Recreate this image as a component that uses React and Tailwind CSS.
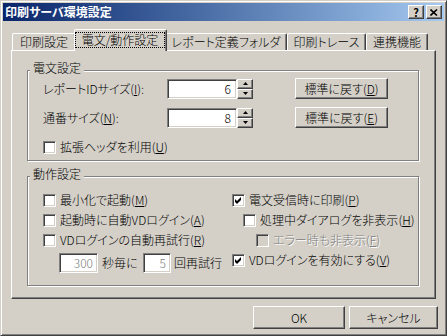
import React from 'react';

const raised =
  'border border-t-white border-l-white border-r-[#404040] border-b-[#404040] shadow-[inset_-1px_-1px_#808080] bg-[#d4d0c8]';
const sunken =
  'border border-t-[#808080] border-l-[#808080] border-r-white border-b-white shadow-[inset_1px_1px_#404040,inset_-1px_-1px_#d4d0c8]';

const Acc = ({ c }) => <span className="underline underline-offset-[1px]">{c}</span>;

const Check = () => (
  <svg width="9" height="9" viewBox="0 0 9 9">
    <polygon points="1,3 3,5 7,1 7,4 3,8 1,6" fill="#000" />
  </svg>
);

const CheckBox = ({ checked, disabled, label, acc, className = '' }) => (
  <div className={`flex items-center gap-[4px] h-[20px] ${className}`}>
    <span
      className={`w-[13px] h-[13px] shrink-0 flex items-center justify-center ${sunken} ${
        disabled ? 'bg-[#d4d0c8]' : 'bg-white'
      }`}
    >
      {checked && <Check />}
    </span>
    <span className={disabled ? 'text-[#808080] [text-shadow:1px_1px_0_#fff]' : ''}>
      {label}(<Acc c={acc} />)
    </span>
  </div>
);

const Spinner = () => (
  <div className="flex flex-col w-[16px] h-[20px]">
    <div className={`flex-1 flex items-center justify-center ${raised}`}>
      <svg width="5" height="3" viewBox="0 0 5 3">
        <polygon points="2.5,0 5,3 0,3" fill="#000" />
      </svg>
    </div>
    <div className={`flex-1 flex items-center justify-center ${raised}`}>
      <svg width="5" height="3" viewBox="0 0 5 3">
        <polygon points="0,0 5,0 2.5,3" fill="#000" />
      </svg>
    </div>
  </div>
);

const Group = ({ title, className = '', children }) => (
  <div
    className={`relative w-[392px] border border-[#808080] shadow-[1px_1px_0_#fff,inset_1px_1px_0_#fff] ${className}`}
  >
    <span className="absolute left-[2px] -top-[10px] bg-[#d4d0c8] px-[3px] leading-[14px]">{title}</span>
    {children}
  </div>
);

const SizeRow = ({ label, acc, value, button, btnAcc, className = '' }) => (
  <div className={`flex items-center ${className}`}>
    <span className="w-[124px]">
      {label}(<Acc c={acc} />):
    </span>
    <div className={`w-[70px] h-[20px] bg-white flex items-center justify-end pr-[5px] ${sunken}`}>{value}</div>
    <Spinner />
    <button className={`ml-[42px] w-[93px] h-[21px] flex items-center justify-center ${raised}`}>
      {button}(<Acc c={btnAcc} />)
    </button>
  </div>
);

const tabs = [
  { label: '印刷設定', w: 'w-[64px]' },
  { label: '電文/動作設定', w: 'w-[93px]', active: true },
  { label: 'レポート定義フォルダ', w: 'w-[122px]' },
  { label: '印刷トレース', w: 'w-[79px]' },
  { label: '連携機能', w: 'w-[62px]' },
];

export default function App() {
  return (
    <div className="w-[447px] h-[336px] bg-[#d4d0c8] text-black text-[12px] leading-[14px] font-light font-['Noto_Sans_CJK_JP',sans-serif] [font-feature-settings:'palt'] border border-t-[#d4d0c8] border-l-[#d4d0c8] border-r-[#404040] border-b-[#404040] shadow-[inset_1px_1px_#fff,inset_-1px_-1px_#808080] p-[2px] overflow-hidden">
      {/* title bar */}
      <div className="h-[18px] flex items-center justify-between pl-[2px] pr-[2px] bg-gradient-to-r from-[#0a246a] to-[#a6caf0]">
        <span className="text-white font-bold">印刷サーバ環境設定</span>
        <div className="flex gap-[2px]">
          <div className={`w-[16px] h-[14px] flex items-center justify-center font-bold text-[11px] leading-none ${raised}`}>
            ?
          </div>
          <div className={`w-[16px] h-[14px] flex items-center justify-center ${raised}`}>
            <svg width="8" height="7" viewBox="0 0 8 7">
              <path d="M0.5 0.5L7 6.5M7 0.5L0.5 6.5" stroke="#000" strokeWidth="1.6" />
            </svg>
          </div>
        </div>
      </div>

      {/* tabs */}
      <div className="flex items-end h-[21px] mt-[8px] ml-[9px]">
        {tabs.map((t) =>
          t.active ? (
            <div
              key={t.label}
              className={`${t.w} h-[22px] -mx-[2px] self-start relative z-10 bg-[#d4d0c8] border-t border-l border-r border-t-white border-l-white border-r-[#404040] shadow-[inset_-1px_0_#808080] rounded-t-[2px] pt-[2px] pr-[1px]`}
            >
              <div className="h-[16px] border border-dotted border-black flex items-center justify-center">
                {t.label}
              </div>
            </div>
          ) : (
            <div
              key={t.label}
              className={`${t.w} h-[17px] shrink-0 flex items-center justify-center border-t border-l border-r border-t-white border-l-white border-r-[#404040] shadow-[inset_-1px_0_#808080] rounded-t-[2px]`}
            >
              {t.label}
            </div>
          )
        )}
      </div>

      {/* panel */}
      <div className="ml-[8px] w-[425px] h-[249px] border border-t-white border-l-white border-r-[#404040] border-b-[#404040] shadow-[inset_-1px_-1px_#808080] pt-[19px] pl-[15px]">
        <Group title="電文設定" className="h-[91px] pt-[7px] pl-[15px]">
          <SizeRow label="レポートIDサイズ" acc="I" value="6" button="標準に戻す" btnAcc="D" />
          <SizeRow label="通番サイズ" acc="N" value="8" button="標準に戻す" btnAcc="E" className="mt-[8px]" />
          <CheckBox label="拡張ヘッダを利用" acc="U" className="mt-[9px]" />
        </Group>

        <Group title="動作設定" className="mt-[15px] h-[110px] pt-[13px] pl-[15px]">
          <div className="grid grid-cols-[189px_1fr]">
            <CheckBox label="最小化で起動" acc="M" />
            <CheckBox label="電文受信時に印刷" acc="P" checked />
            <CheckBox label="起動時に自動VDログイン" acc="A" />
            <CheckBox label="処理中ダイアログを非表示" acc="H" className="pl-[11px]" />
            <CheckBox label="VDログインの自動再試行" acc="R" />
            <CheckBox label="エラー時も非表示" acc="F" disabled className="pl-[24px]" />
            <div className="flex items-center h-[20px] mt-[3px] pl-[16px]">
              <div className={`w-[39px] h-[20px] bg-white text-[#808080] flex items-center justify-end pr-[4px] ${sunken}`}>
                300
              </div>
              <span className="ml-[4px] w-[41px]">秒毎に</span>
              <div className={`w-[28px] h-[20px] bg-white text-[#808080] flex items-center justify-end pr-[4px] ${sunken}`}>
                5
              </div>
              <span className="ml-[3px]">回再試行</span>
            </div>
            <CheckBox label="VDログインを有効にする" acc="V" checked />
          </div>
        </Group>
      </div>

      {/* buttons */}
      <div className="flex justify-end gap-[4px] mt-[7px] mr-[6px]">
        <button className={`w-[92px] h-[23px] flex items-center justify-center ${raised}`}>OK</button>
        <button className={`w-[89px] h-[23px] flex items-center justify-center ${raised}`}>キャンセル</button>
      </div>
    </div>
  );
}
